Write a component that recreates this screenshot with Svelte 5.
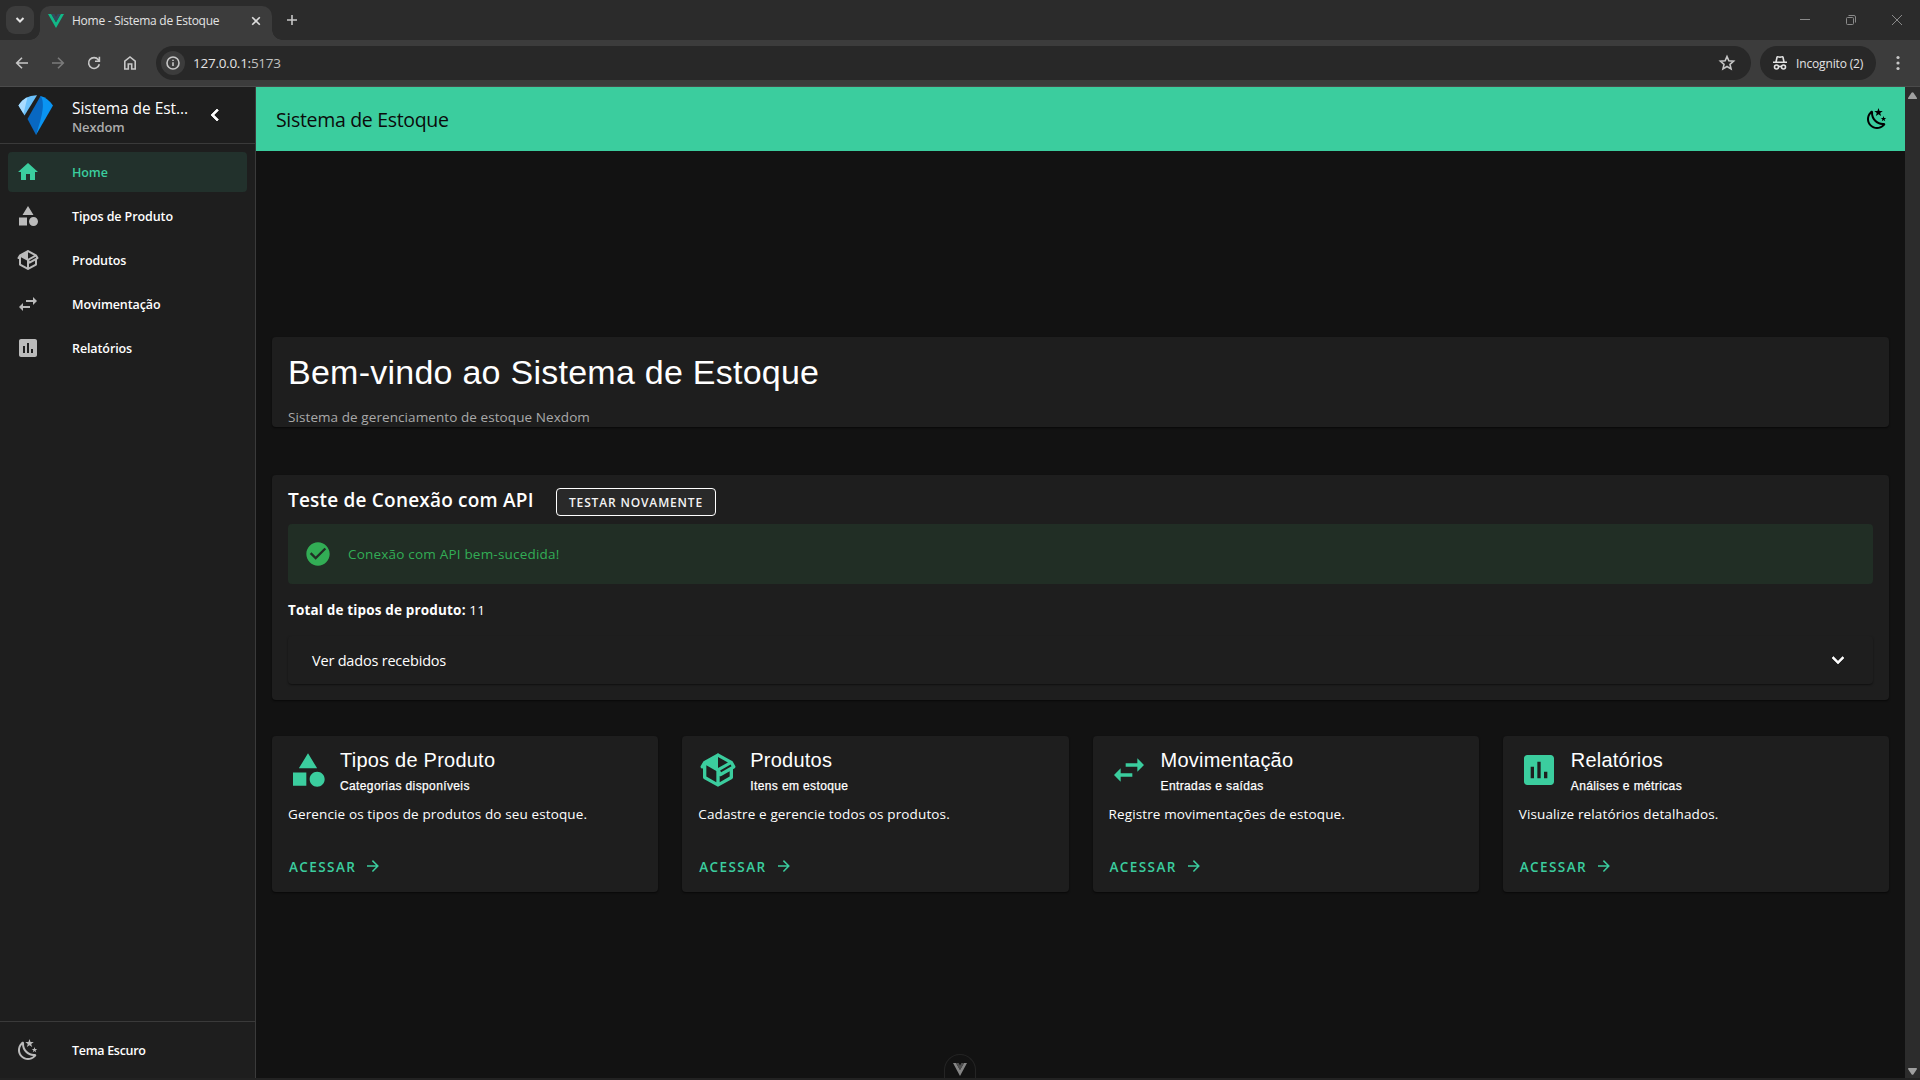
<script>
  const icons = {
    home: 'M10,20V14H14V20H19V12H22L12,3L2,12H5V20H10Z',
    shape: 'M11,13.5V21.5H3V13.5H11M12,2L17.5,11H6.5L12,2M17.5,13C20,13 22,15 22,17.5C22,20 20,22 17.5,22C15,22 13,20 13,17.5C13,15 15,13 17.5,13Z',
    box: 'M2,10.96C1.5,10.68 1.35,10.07 1.63,9.59L3.13,7C3.24,6.8 3.41,6.66 3.6,6.58L11.43,2.18C11.59,2.06 11.79,2 12,2C12.21,2 12.41,2.06 12.57,2.18L20.47,6.62C20.66,6.72 20.82,6.88 20.91,7.08L22.36,9.6C22.64,10.08 22.47,10.69 22,10.96L21,11.54V16.5C21,16.88 20.79,17.21 20.47,17.38L12.57,21.82C12.41,21.94 12.21,22 12,22C11.79,22 11.59,21.94 11.43,21.82L3.53,17.38C3.21,17.21 3,16.88 3,16.5V10.96C2.7,11.13 2.32,11.14 2,10.96M12,4.15V4.15L12,10.85V10.85L17.96,7.5L12,4.15M5,15.91L11,19.29V12.58L5,9.21V15.91M19,15.91V12.69L14,15.59C13.67,15.77 13.3,15.76 13,15.6V19.29L19,15.91M13.85,13.36L20.13,9.73L19.55,8.72L13.27,12.35L13.85,13.36Z',
    swap: 'M21,9L17,5V8H10V10H17V13M7,11L3,15L7,19V16H14V14H7V11Z',
    chart: 'M9 17H7V10H9V17M13 17H11V7H13V17M17 17H15V13H17V17M19 3H5C3.9 3 3 3.9 3 5V19C3 20.1 3.9 21 5 21H19C20.1 21 21 20.1 21 19V5C21 3.9 20.1 3 19 3Z',
    night: 'M17.75,4.09L15.22,6.03L16.13,9.09L13.5,7.28L10.87,9.09L11.78,6.03L9.25,4.09L12.44,4L13.5,1L14.56,4L17.75,4.09M21.25,11L19.61,12.25L20.2,14.23L18.5,13.06L16.8,14.23L17.39,12.25L15.75,11L17.81,10.95L18.5,9L19.19,10.95L21.25,11M18.97,15.95C19.8,15.87 20.69,17.05 20.16,17.8C19.84,18.25 19.5,18.67 19.08,19.07C15.17,23 8.84,23 4.94,19.07C1.03,15.17 1.03,8.83 4.94,4.93C5.34,4.53 5.76,4.17 6.21,3.85C6.96,3.32 8.14,4.21 8.06,5.04C7.79,7.9 8.75,10.87 10.95,13.06C13.14,15.26 16.1,16.22 18.97,15.95M17.33,17.97C14.5,17.81 11.7,16.64 9.53,14.5C7.36,12.31 6.2,9.5 6.04,6.68C3.23,9.82 3.34,14.64 6.35,17.66C9.37,20.67 14.19,20.78 17.33,17.97Z',
    chevronLeft: 'M15.41,16.58L10.83,12L15.41,7.41L14,6L8,12L14,18L15.41,16.58Z',
    chevronDown: 'M7.41,8.58L12,13.17L16.59,8.58L18,10L12,16L6,10L7.41,8.58Z',
    arrow: 'M4,11V13H16L10.5,18.5L11.92,19.92L19.84,12L11.92,4.08L10.5,5.5L16,11H4Z',
    check: 'M12 2C6.5 2 2 6.5 2 12S6.5 22 12 22 22 17.5 22 12 17.5 2 12 2M10 17L5 12L6.41 10.59L10 14.17L17.59 6.58L19 8L10 17Z',
  };

  const nav = [
    { label: 'Home', icon: 'home', active: true },
    { label: 'Tipos de Produto', icon: 'shape' },
    { label: 'Produtos', icon: 'box' },
    { label: 'Movimentação', icon: 'swap' },
    { label: 'Relatórios', icon: 'chart' },
  ];

  const cards = [
    { title: 'Tipos de Produto', sub: 'Categorias disponíveis', text: 'Gerencie os tipos de produtos do seu estoque.', icon: 'shape' },
    { title: 'Produtos', sub: 'Itens em estoque', text: 'Cadastre e gerencie todos os produtos.', icon: 'box' },
    { title: 'Movimentação', sub: 'Entradas e saídas', text: 'Registre movimentações de estoque.', icon: 'swap' },
    { title: 'Relatórios', sub: 'Análises e métricas', text: 'Visualize relatórios detalhados.', icon: 'chart' },
  ];
</script>

{#snippet icon(name, size)}
  <svg class="icon" width={size} height={size} viewBox="0 0 24 24"><path d={icons[name]} /></svg>
{/snippet}

<div class="browser">
  <div class="tabstrip">
    <div class="tab-search">
      <svg width="10" height="10" viewBox="0 0 10 10"><path class="line bold" d="M1.5 3 5 6.5 8.500 3" /></svg>
    </div>
    <div class="tab">
      <svg width="16" height="16" viewBox="0 0 16 16">
        <path fill="#12b887" d="M0 1h3.300L8 9.300 12.700 1H16L8 15z" />
        <path fill="#35495e" d="M3.300 1h3L8 4l1.700-3h3L8 9.300z" />
      </svg>
      <span class="tab-title">Home - Sistema de Estoque</span>
      <svg width="10" height="10" viewBox="0 0 10 10"><path class="line close" d="M1.200 1.200 8.800 8.800M8.800 1.200 1.200 8.800" /></svg>
    </div>
    <svg class="plus" width="12" height="12" viewBox="0 0 12 12"><path class="line" d="M6 1v10M1 6h10" /></svg>
    <div class="window-buttons">
      <svg width="12" height="12" viewBox="0 0 12 12"><path d="M1 5.500h10" /></svg>
      <svg width="12" height="12" viewBox="0 0 12 12"><rect x="1.500" y="3.500" width="7" height="7" rx="1" /><path d="M3.500 1.500H9q1.500 0 1.500 1.500v5.500" /></svg>
      <svg width="12" height="12" viewBox="0 0 12 12"><path d="m1 1 10 10M11 1 1 11" /></svg>
    </div>
  </div>

  <div class="toolbar">
    <div class="tools">
      <svg width="16" height="16" viewBox="0 0 16 16"><path class="line" d="M14 8H3M8 2.700 2.700 8 8 13.300" /></svg>
      <svg class="dim" width="16" height="16" viewBox="0 0 16 16"><path class="line" d="M2 8h11M8 2.700 13.300 8 8 13.300" /></svg>
      <svg width="16" height="16" viewBox="0 0 16 16"><path class="line" d="M13.300 9.200A5.400 5.400 0 1 1 12.300 4.700L13.600 6M13.400 1.800V6.200H9" /></svg>
      <svg width="16" height="16" viewBox="0 0 16 16"><path class="line" d="M2.800 14V6.200L8 2l5.200 4.200V14H9.700V9H6.300v5z" /></svg>
    </div>
    <div class="omnibox">
      <div class="site-info">
        <svg width="16" height="16" viewBox="0 0 16 16"><circle class="line" cx="8" cy="8" r="6" /><path class="line" d="M8 7.300v3.700M8 4.700v1.300" /></svg>
      </div>
      <span class="url">127.0.0.1:<em>5173</em></span>
      <svg width="18" height="18" viewBox="0 0 18 18"><path class="line" d="m9 2.500 1.850 4.350 4.700.4-3.560 3.100 1.060 4.600L9 12.500l-4.050 2.450 1.060-4.600-3.560-3.100 4.700-.4z" /></svg>
    </div>
    <div class="incognito">
      <svg width="16" height="16" viewBox="0 0 16 16">
        <path class="line" d="M1 7.300h14M4 7 5 2.300q.2-.7 1-.5l2 .4 2-.4q.8-.2 1 .5L12 7M6.700 11.700Q8 10.900 9.300 11.700" />
        <circle class="line" cx="4.500" cy="12" r="2" /><circle class="line" cx="11.500" cy="12" r="2" />
      </svg>
      <span>Incognito (2)</span>
    </div>
    <svg class="dots" width="4" height="16" viewBox="0 0 4 16"><circle cx="2" cy="2.500" r="1.600" /><circle cx="2" cy="8" r="1.600" /><circle cx="2" cy="13.500" r="1.600" /></svg>
  </div>

  <div class="page">
    <aside>
      <header class="brand">
        <svg class="logo" width="36" height="40" viewBox="0 0 36 40">
          <path fill="#6bc1fb" d="M.500 10.500Q7 0 19 .300L6.500 20.500z" />
          <path fill="#a9dcff" d="M.500 10.500Q4 4.500 9.500 2.200L5.500 18.500z" />
          <path fill="#0a94f2" d="M22.500 1Q30 3 35 10.500L18 40z" />
          <path fill="#0868c2" d="M22.500 1Q27.500 7 22 27L18 40 9.500 24z" />
        </svg>
        <div class="brand-text">
          <div class="brand-name">Sistema de Est...</div>
          <div class="brand-sub">Nexdom</div>
        </div>
        {@render icon('chevronLeft', 24)}
      </header>
      <nav>
        {#each nav as item}
          <div class="nav-item" class:active={item.active}>
            {@render icon(item.icon, 24)}
            <span>{item.label}</span>
          </div>
        {/each}
      </nav>
      <footer>
        <div class="nav-item">
          {@render icon('night', 24)}
          <span class="theme">Tema Escuro</span>
        </div>
      </footer>
    </aside>

    <div class="content">
      <div class="appbar">
        <span>Sistema de Estoque</span>
        {@render icon('night', 24)}
      </div>
      <main>
        <section class="card hero">
          <h1>Bem-vindo ao Sistema de Estoque</h1>
          <p>Sistema de gerenciamento de estoque Nexdom</p>
        </section>

        <section class="card api">
          <div class="api-head">
            <h2>Teste de Conexão com API</h2>
            <button>TESTAR NOVAMENTE</button>
          </div>
          <div class="alert">
            {@render icon('check', 28)}
            <span>Conexão com API bem-sucedida!</span>
          </div>
          <p class="total"><strong>Total de tipos de produto:</strong> 11</p>
          <div class="panel">
            <span>Ver dados recebidos</span>
            {@render icon('chevronDown', 24)}
          </div>
        </section>

        <div class="grid">
          {#each cards as card}
            <article class="card tile">
              <div class="tile-head">
                {@render icon(card.icon, 40)}
                <div>
                  <h3>{card.title}</h3>
                  <h4>{card.sub}</h4>
                </div>
              </div>
              <p>{card.text}</p>
              <a href="#top"><span>ACESSAR</span>{@render icon('arrow', 18)}</a>
            </article>
          {/each}
        </div>
      </main>
      <div class="devtools">
        <svg width="14" height="13" viewBox="0 0 14 13"><path fill="#858585" d="M0 0h3l4 7 4-7h3L7 13z" /><path fill="#505050" d="M3 0h2.600L7 2.500 8.400 0H11L7 7z" /></svg>
      </div>
    </div>

    <div class="scrollbar">
      <svg width="9" height="7" viewBox="0 0 9 7"><path d="M3.500.8q1-1.200 2 0L9 6q.2 1-1 1H1Q-.2 7 0 6z" /></svg>
      <svg class="down" width="9" height="7" viewBox="0 0 9 7"><path d="M3.500.8q1-1.200 2 0L9 6q.2 1-1 1H1Q-.2 7 0 6z" /></svg>
    </div>
  </div>
</div>

<style>
  :global(body) { margin: 0; background: #121212; }
  .browser {
    width: 1920px; height: 1080px; overflow: hidden;
    display: flex; flex-direction: column;
    font-family: "Open Sans", "Noto Sans", sans-serif;
    color: #fff; background: #222;
  }
  .browser * { box-sizing: border-box; }
  svg { display: block; flex: none; }
  h1, h2, h3, h4, p { margin: 0; }
  span, h1, h2, h3, h4, p, button { white-space: nowrap; }
  .icon { fill: currentColor; }
  .line { fill: none; stroke: #c7c7c7; stroke-width: 1.6; }
  .line.bold { stroke: #e3e3e3; stroke-width: 2; }
  .line.close { stroke: #dcdcdc; stroke-width: 1.6; }

  .tabstrip { height: 40px; flex: none; display: flex; align-items: center; background: #2b2b2b; padding-left: 6px; }
  .tab-search { width: 28px; height: 28px; border-radius: 9px; background: #3c3c3c; display: grid; place-items: center; }
  .tab {
    position: relative; align-self: flex-end; width: 232px; height: 34px; margin-left: 6px; padding: 0 11px 5px 8px;
    border-radius: 10px 10px 0 0; background: #3c3c3c; display: flex; align-items: center;
  }
  .tab::before, .tab::after { content: ""; position: absolute; bottom: 0; width: 10px; height: 10px; }
  .tab::before { left: -10px; background: radial-gradient(circle at 0 0, transparent 9.5px, #3c3c3c 10px); }
  .tab::after { right: -10px; background: radial-gradient(circle at 100% 0, transparent 9.5px, #3c3c3c 10px); }
  .tab-title { flex: 1; margin: 0 0 0 8px; font-size: 12px; letter-spacing: -0.26px; color: #e3e3e3; }
  .plus { margin-left: 14px; }
  .window-buttons { margin-left: auto; display: flex; gap: 34px; padding-right: 17px; }
  .window-buttons svg { fill: none; stroke: #8a8a8a; stroke-width: 1; }

  .toolbar { height: 47px; flex: none; display: flex; align-items: center; background: #3c3c3c; border-bottom: 1px solid #4b4b4b; padding: 0 20px 0 14px; }
  .tools { display: flex; gap: 20px; width: 142px; }
  .dim { opacity: 0.45; }
  .omnibox { width: 1595px; height: 34px; border-radius: 17px; background: #282828; display: flex; align-items: center; padding: 0 15px 0 5px; }
  .site-info { width: 24px; height: 24px; border-radius: 50%; background: #3c3c3c; display: grid; place-items: center; }
  .url { flex: 1; margin-left: 8px; font-size: 13.500px; letter-spacing: -0.26px; color: #e3e3e3; }
  .url em { font-style: normal; color: #c0c0c0; }
  .incognito { width: 116px; height: 34px; border-radius: 17px; margin-left: 9px; background: #282828; display: flex; align-items: center; padding-left: 12px; gap: 8px; font-size: 12px; letter-spacing: -0.15px; color: #e3e3e3; }
  .incognito .line { stroke: #e3e3e3; }
  .dots { margin-left: auto; fill: #c7c7c7; }

  .page { height: 991px; flex: none; display: flex; background: #121212; }
  aside { width: 256px; background: #1e1e1e; border-right: 1px solid #3a3a3a; display: flex; flex-direction: column; }
  .brand { height: 57px; flex: none; display: flex; border-bottom: 1px solid #3a3a3a; padding-left: 18px; }
  .logo { margin-top: 8px; }
  .brand-text { width: 131px; margin-left: 18px; padding-top: 11px; line-height: 20px; }
  .brand-name { font-size: 15.500px; letter-spacing: -0.05px; }
  .brand-sub { margin-top: -1px; font-size: 13px; font-weight: 600; letter-spacing: -0.1px; color: #acacac; }
  .brand .icon { margin-top: 16px; stroke: currentColor; stroke-width: 0.8; }
  nav { padding: 8px 8px 0; display: flex; flex-direction: column; gap: 4px; }
  .nav-item { height: 40px; border-radius: 4px; display: flex; align-items: center; padding-left: 8px; gap: 32px; font-size: 12.500px; font-weight: 600; letter-spacing: -0.1px; }
  .nav-item .icon { color: #bbb; }
  .nav-item.active, .nav-item.active .icon { color: #3bcd9e; }
  .nav-item.active { background: #22312c; }
  footer { margin-top: auto; height: 57px; border-top: 1px solid #3a3a3a; padding: 8px; }
  .theme { letter-spacing: -0.3px; }

  .content { position: relative; width: 1649px; display: flex; flex-direction: column; }
  .appbar { height: 64px; background: #3bcd9e; color: #0b0b0b; display: flex; align-items: center; justify-content: space-between; padding: 0 16px 0 20px; font-size: 19.500px; letter-spacing: -0.32px; }
  .appbar .icon { color: #000; }
  main { padding: 186px 16px 0; }
  .card { background: #1e1e1e; border-radius: 4px; box-shadow: 0 1px 2px rgba(0, 0, 0, 0.6); }
  .hero { height: 90px; padding: 15px 16px 0; }
  .hero h1 { font: 400 34px/40px "Liberation Sans", Arial, sans-serif; letter-spacing: 0.25px; }
  .hero p { margin-top: 15px; font-size: 13.500px; line-height: 20px; font-weight: 500; letter-spacing: 0.08px; color: #a9a9a9; }
  .api { height: 225px; margin-top: 48px; padding: 13px 16px 0; }
  .api-head { height: 28px; display: flex; align-items: center; gap: 23px; }
  .api-head h2 { font-size: 19px; line-height: 24px; font-weight: 600; padding-bottom: 5px; width: 245px; letter-spacing: 0.2px; }
  button { width: 160px; height: 28px; padding: 1px 0 0; border: 1px solid #fff; border-radius: 4px; background: #292929; color: #f4f4f4; font: 600 12px/25px "Open Sans", "Noto Sans", sans-serif; letter-spacing: 0.85px; }
  .alert { height: 60px; margin-top: 8px; border-radius: 4px; background: #212e25; color: #32ad55; display: flex; align-items: center; padding-left: 16px; gap: 16px; font-size: 13.500px; letter-spacing: 0.2px; }
  .total { margin-top: 16px; font-size: 13.500px; line-height: 20px; letter-spacing: 0.16px; }
  .total strong { font-weight: 700; }
  .panel { height: 48px; margin-top: 16px; border-radius: 4px; display: flex; align-items: center; justify-content: space-between; padding: 0 23px 0 24px; font-size: 14.500px; letter-spacing: -0.2px; box-shadow: 0 1px 2px rgba(0, 0, 0, 0.5); }
  .panel .icon { stroke: currentColor; stroke-width: 0.6; }
  .grid { display: grid; grid-template-columns: repeat(4, 1fr); gap: 24px; margin-top: 36px; }
  .tile { height: 156px; padding: 10px 16px 0; }
  .tile-head { display: flex; gap: 12px; height: 50px; }
  .tile-head .icon { margin-top: 4px; color: #3bcd9e; }
  .tile h3 { font: 400 20px/28px "Liberation Sans", Arial, sans-serif; letter-spacing: 0.23px; }
  .tile h4 { margin-top: 2px; font: 500 12px/20px "Liberation Sans", Arial, sans-serif; letter-spacing: 0.38px; -webkit-text-stroke: 0.25px currentColor; }
  .tile p { margin-top: 8px; font-size: 13.500px; line-height: 20px; letter-spacing: 0.13px; }
  .tile a { display: flex; align-items: center; gap: 8px; height: 20px; margin: 33px 0 0 1px; font-size: 13.500px; font-weight: 600; letter-spacing: 1.42px; color: #3bcd9e; text-decoration: none; }
  .tile a .icon { margin-bottom: 2px; }
  /* Floating toggle pinned over the bottom edge of the page */
  .devtools { position: absolute; left: 688px; bottom: 0; width: 32px; height: 24px; border: 1px solid #242424; border-bottom: 0; border-radius: 16px 16px 0 0; background: #121212; display: grid; place-items: center; padding-top: 5px; }
  .scrollbar { width: 15px; background: #2c2c2c; display: flex; flex-direction: column; justify-content: space-between; align-items: center; padding: 5px 0 3px; }
  .scrollbar svg { fill: #9f9f9f; }
  .scrollbar .down { transform: rotate(180deg); }
</style>
